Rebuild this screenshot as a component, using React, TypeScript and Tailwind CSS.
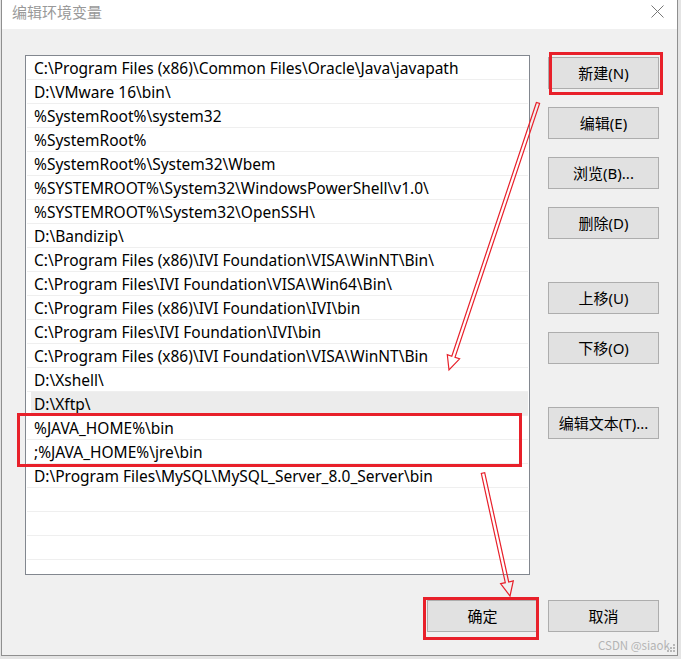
import React from "react";

// ─── data ──────────────────────────────────────────────────────────────────

const paths = [
  "C:\\Program Files (x86)\\Common Files\\Oracle\\Java\\javapath",
  "D:\\VMware 16\\bin\\",
  "%SystemRoot%\\system32",
  "%SystemRoot%",
  "%SystemRoot%\\System32\\Wbem",
  "%SYSTEMROOT%\\System32\\WindowsPowerShell\\v1.0\\",
  "%SYSTEMROOT%\\System32\\OpenSSH\\",
  "D:\\Bandizip\\",
  "C:\\Program Files (x86)\\IVI Foundation\\VISA\\WinNT\\Bin\\",
  "C:\\Program Files\\IVI Foundation\\VISA\\Win64\\Bin\\",
  "C:\\Program Files (x86)\\IVI Foundation\\IVI\\bin",
  "C:\\Program Files\\IVI Foundation\\IVI\\bin",
  "C:\\Program Files (x86)\\IVI Foundation\\VISA\\WinNT\\Bin",
  "D:\\Xshell\\",
  "D:\\Xftp\\",
  "%JAVA_HOME%\\bin",
  ";%JAVA_HOME%\\jre\\bin",
  "D:\\Program Files\\MySQL\\MySQL_Server_8.0_Server\\bin",
  "",
  "",
  "",
  "",
];

const SELECTED = 14;

// ─── helpers ───────────────────────────────────────────────────────────────

// outline of a hollow block arrow from (x1,y1) to the tip (x2,y2)
function arrowOutline(x1: number, y1: number, x2: number, y2: number) {
  const sh = 1.7;
  const hh = 6.5;
  const hl = 14;
  const len = Math.hypot(x2 - x1, y2 - y1);
  const ux = (x2 - x1) / len;
  const uy = (y2 - y1) / len;
  const nx = -uy;
  const ny = ux;
  const bx = x2 - ux * hl;
  const by = y2 - uy * hl;
  const pts = [
    [x1 + nx * sh, y1 + ny * sh],
    [bx + nx * sh, by + ny * sh],
    [bx + nx * hh, by + ny * hh],
    [x2, y2],
    [bx - nx * hh, by - ny * hh],
    [bx - nx * sh, by - ny * sh],
    [x1 - nx * sh, y1 - ny * sh],
  ];
  return pts.map(([x, y]) => `${x.toFixed(1)},${y.toFixed(1)}`).join(" ");
}

// ─── sub-components ────────────────────────────────────────────────────────

const WinButton = ({ label, className = "" }: { label: string; className?: string }) => (
  <button
    className={`w-[111px] h-[32px] bg-[#e1e1e1] border border-[#adadad] text-[15px] text-black leading-none flex items-center justify-center ${className}`}
  >
    {label}
  </button>
);

// ─── page ──────────────────────────────────────────────────────────────────

export default function App() {
  return (
    <div className="relative w-[681px] h-[659px] overflow-hidden bg-[#e4e4e4] font-['Noto_Sans','Noto_Sans_CJK_SC',sans-serif]">
      {/* Dialog window */}
      <div className="ml-[1px] w-[677px] h-[656px] flex flex-col border-l border-r border-b border-[#8f8f8f] bg-[#f0f0f0]">
        {/* Title bar */}
        <div className="h-[29px] bg-white flex items-start justify-between pt-[3px] pl-[10px] pr-[13px]">
          <span className="text-[15px] leading-[18px] text-[#999999]">编辑环境变量</span>
          <svg width="13" height="13" viewBox="0 0 13 13" className="mt-[2px]">
            <path d="M0.5 0.5 L12.5 12.5 M12.5 0.5 L0.5 12.5" stroke="#777" strokeWidth="1" />
          </svg>
        </div>

        {/* Body */}
        <div className="flex-1 flex flex-col pl-[23px] pt-[26px] pr-[18px]">
          <div className="flex">
            {/* Path list */}
            <div className="w-[505px] h-[520px] border border-[#82878f] bg-white overflow-hidden">
              {paths.map((p, i) => (
                <div key={i} className="h-[24px] mx-[1px] border-b border-[#efefef] flex">
                  <div
                    className={`flex-1 flex items-center pt-[2px] text-[15.5px] text-black whitespace-nowrap ${
                      i === SELECTED ? "ml-[4px] pl-[3px] bg-[#ececec]" : "pl-[7px]"
                    }`}
                  >
                    {p}
                  </div>
                </div>
              ))}
            </div>

            {/* Side buttons */}
            <div className="ml-[18px] pt-[2px] flex flex-col">
              <WinButton label="新建(N)" />
              <WinButton label="编辑(E)" className="mt-[18px]" />
              <WinButton label="浏览(B)..." className="mt-[18px]" />
              <WinButton label="删除(D)" className="mt-[18px]" />
              <WinButton label="上移(U)" className="mt-[43px]" />
              <WinButton label="下移(O)" className="mt-[18px]" />
              <WinButton label="编辑文本(T)..." className="mt-[43px]" />
            </div>
          </div>

          {/* OK / Cancel */}
          <div className="mt-[25px] flex justify-end gap-[10px]">
            <WinButton label="确定" />
            <WinButton label="取消" />
          </div>
        </div>
      </div>

      {/* Annotations: red boxes */}
      <div className="absolute left-[549px] top-[52px] w-[114px] h-[43px] border-[3px] border-[#e8202a] pointer-events-none" />
      <div className="absolute left-[17px] top-[413px] w-[505px] h-[54px] border-[3px] border-[#e8202a] pointer-events-none" />
      <div className="absolute left-[423px] top-[597px] w-[116px] h-[43px] border-[3px] border-[#e8202a] pointer-events-none" />

      {/* Annotations: arrows */}
      <svg className="absolute inset-0 pointer-events-none" width="681" height="659">
        <polygon
          points={arrowOutline(538, 103, 449, 370)}
          fill="none"
          stroke="#e8202a"
          strokeWidth="1.2"
          strokeLinejoin="miter"
        />
        <polygon
          points={arrowOutline(483, 473, 510, 596)}
          fill="none"
          stroke="#e8202a"
          strokeWidth="1.2"
          strokeLinejoin="miter"
        />
      </svg>

      {/* Watermark + size grip */}
      <span className="absolute left-[598px] top-[637px] whitespace-nowrap text-[11.5px] leading-[16px] text-[#b4b4b4] font-['Noto_Sans_CJK_SC',sans-serif]">
        CSDN @siaok
      </span>
      <svg className="absolute left-[666px] top-[643px]" width="10" height="10" viewBox="0 0 10 10">
        <rect x="7" y="1" width="2" height="2" fill="#b8b8b8" />
        <rect x="4" y="4" width="2" height="2" fill="#b8b8b8" />
        <rect x="7" y="4" width="2" height="2" fill="#b8b8b8" />
        <rect x="1" y="7" width="2" height="2" fill="#b8b8b8" />
        <rect x="4" y="7" width="2" height="2" fill="#b8b8b8" />
        <rect x="7" y="7" width="2" height="2" fill="#b8b8b8" />
      </svg>
    </div>
  );
}
